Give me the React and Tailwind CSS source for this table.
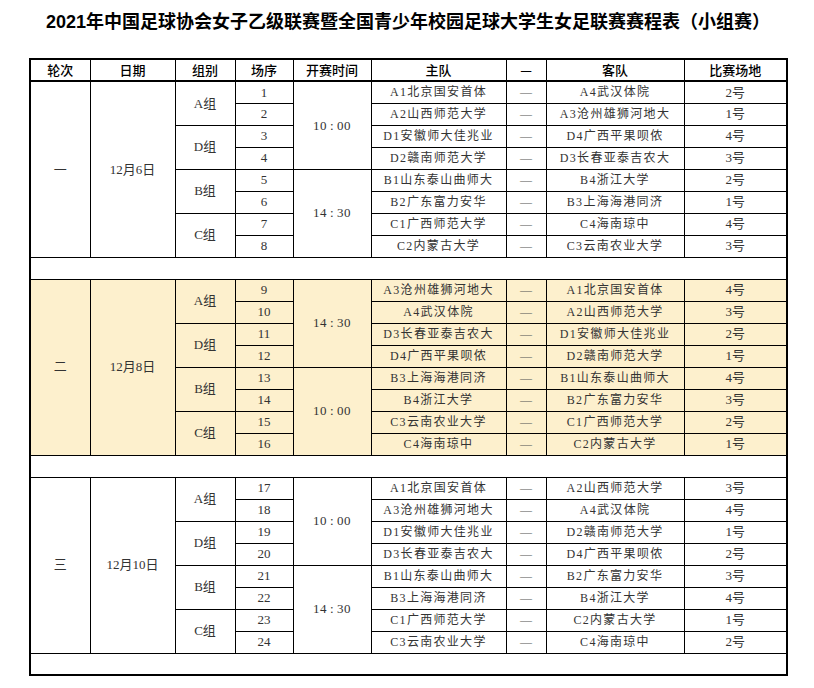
import React from 'react';

const rounds = [
    {
        name: '一',
        date: '12月6日',
        times: [['10', '00'], ['14', '30']],
        bg: 'bg-white',
        matches: [
            ['1', 'A1北京国安首体', 'A4武汉体院', '2号'],
            ['2', 'A2山西师范大学', 'A3沧州雄狮河地大', '1号'],
            ['3', 'D1安徽师大佳兆业', 'D4广西平果呗侬', '4号'],
            ['4', 'D2赣南师范大学', 'D3长春亚泰吉农大', '3号'],
            ['5', 'B1山东泰山曲师大', 'B4浙江大学', '2号'],
            ['6', 'B2广东富力安华', 'B3上海海港同济', '1号'],
            ['7', 'C1广西师范大学', 'C4海南琼中', '4号'],
            ['8', 'C2内蒙古大学', 'C3云南农业大学', '3号'],
        ],
    },
    {
        name: '二',
        date: '12月8日',
        times: [['14', '30'], ['10', '00']],
        bg: 'bg-[#fdf0cd]',
        matches: [
            ['9', 'A3沧州雄狮河地大', 'A1北京国安首体', '4号'],
            ['10', 'A4武汉体院', 'A2山西师范大学', '3号'],
            ['11', 'D3长春亚泰吉农大', 'D1安徽师大佳兆业', '2号'],
            ['12', 'D4广西平果呗侬', 'D2赣南师范大学', '1号'],
            ['13', 'B3上海海港同济', 'B1山东泰山曲师大', '4号'],
            ['14', 'B4浙江大学', 'B2广东富力安华', '3号'],
            ['15', 'C3云南农业大学', 'C1广西师范大学', '2号'],
            ['16', 'C4海南琼中', 'C2内蒙古大学', '1号'],
        ],
    },
    {
        name: '三',
        date: '12月10日',
        times: [['10', '00'], ['14', '30']],
        bg: 'bg-white',
        matches: [
            ['17', 'A1北京国安首体', 'A2山西师范大学', '3号'],
            ['18', 'A3沧州雄狮河地大', 'A4武汉体院', '4号'],
            ['19', 'D1安徽师大佳兆业', 'D2赣南师范大学', '1号'],
            ['20', 'D3长春亚泰吉农大', 'D4广西平果呗侬', '2号'],
            ['21', 'B1山东泰山曲师大', 'B2广东富力安华', '3号'],
            ['22', 'B3上海海港同济', 'B4浙江大学', '4号'],
            ['23', 'C1广西师范大学', 'C2内蒙古大学', '1号'],
            ['24', 'C3云南农业大学', 'C4海南琼中', '2号'],
        ],
    },
];

const groups = ['A组', 'D组', 'B组', 'C组'];
const headers = ['轮次', '日期', '组别', '场序', '开赛时间', '主队', '—', '客队', '比赛场地'];

const cell = 'border border-black p-0 text-center align-middle';

const App = () => {
    return (
        <div className="w-[814px] h-[688px] bg-white pt-[9px]">
            <h1 className="text-center text-[18px] leading-[26px] font-bold text-black font-[family-name:'Liberation_Sans','Noto_Sans_CJK_SC',sans-serif] pl-[2px]">
                2021年中国足球协会女子乙级联赛暨全国青少年校园足球大学生女足联赛赛程表（小组赛）
            </h1>

            <table className="mt-[23px] ml-[29px] w-[757px] table-fixed border-collapse border-2 border-black">
                <colgroup>
                    <col className="w-[60px]" />
                    <col className="w-[85px]" />
                    <col className="w-[60px]" />
                    <col className="w-[58px]" />
                    <col className="w-[78px]" />
                    <col className="w-[135px]" />
                    <col className="w-[40px]" />
                    <col className="w-[138px]" />
                    <col className="w-[103px]" />
                </colgroup>
                <thead>
                    <tr className="h-[22px] border-b-2 border-black">
                        {headers.map((h, i) => (
                            <th
                                key={i}
                                className={`${cell} text-[13px] font-medium text-black font-[family-name:'Noto_Sans_CJK_SC',sans-serif]`}
                            >
                                {h}
                            </th>
                        ))}
                    </tr>
                </thead>
                <tbody className="text-[12px] text-[#333] font-[family-name:'Liberation_Serif','Noto_Sans_CJK_SC',serif]">
                    {rounds.map((r) => (
                        <React.Fragment key={r.name}>
                            {r.matches.map((m, i) => (
                                <tr key={m[0]} className={`h-[22px] ${r.bg}`}>
                                    {i === 0 && (
                                        <>
                                            <td rowSpan={8} className={`${cell} text-[13px]`}>{r.name}</td>
                                            <td rowSpan={8} className={`${cell} text-[13px]`}>{r.date}</td>
                                        </>
                                    )}
                                    {i % 2 === 0 && (
                                        <td rowSpan={2} className={`${cell} text-[13px]`}>{groups[i / 2]}</td>
                                    )}
                                    <td className={`${cell} text-[13px]`}>{m[0]}</td>
                                    {i % 4 === 0 && (
                                        <td rowSpan={4} className={`${cell} text-[13px] tracking-[0.5px]`}>
                                            {r.times[i / 4][0]}
                                            <span className="mx-[3px]">:</span>
                                            {r.times[i / 4][1]}
                                        </td>
                                    )}
                                    <td className={`${cell} tracking-[1.3px]`}>{m[1]}</td>
                                    <td className={`${cell} text-[#555]`}>—</td>
                                    <td className={`${cell} tracking-[1.3px]`}>{m[2]}</td>
                                    <td className={`${cell} text-[13px]`}>{m[3]}</td>
                                </tr>
                            ))}
                            <tr className="h-[22px] bg-white">
                                <td colSpan={9} className={cell}></td>
                            </tr>
                        </React.Fragment>
                    ))}
                </tbody>
            </table>
        </div>
    );
};

export default App;
